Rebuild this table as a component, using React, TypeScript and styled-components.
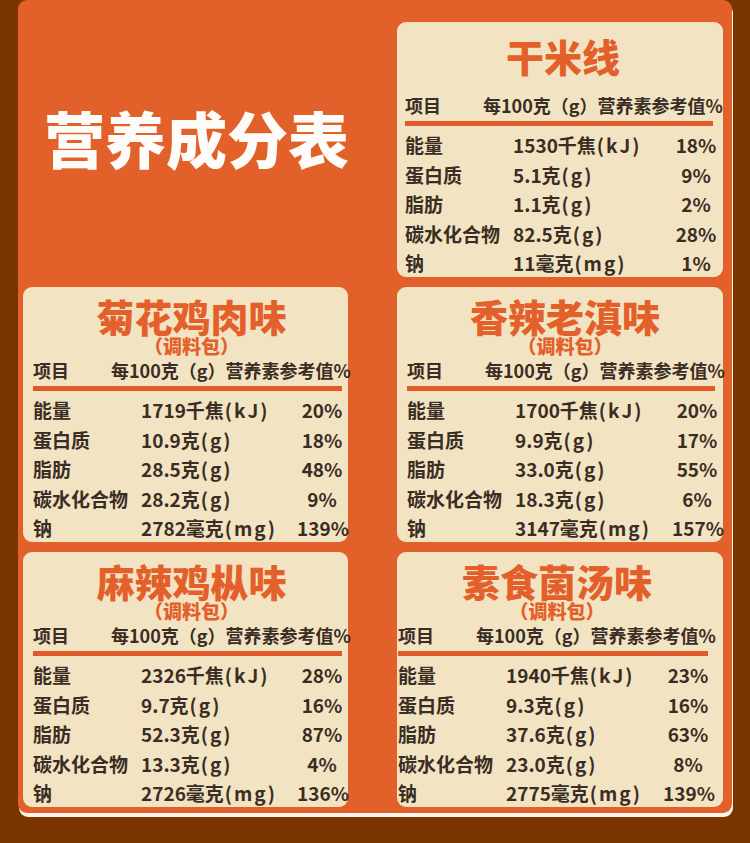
import React from "react";
import styled, { createGlobalStyle } from "styled-components";

const Global = createGlobalStyle`
  html, body { margin: 0; padding: 0; background: #7a3400; }
  body { font-family: "Noto Sans CJK SC", "Noto Sans", sans-serif; }
`;

const Page = styled.div`
  width: 750px;
  height: 843px;
  background: #7a3400;
  padding: 0 18px 0 18px;
  box-sizing: border-box;
  overflow: hidden;
`;

const Panel = styled.div`
  width: 714px;
  height: 813px;
  box-sizing: border-box;
  background: #e2612a;
  border-radius: 9px;
  box-shadow: 1px 4px 0 #fbf5ee;
  padding: 22px 8px 6px 5px;
  display: grid;
  grid-template-columns: 325px 326px;
  grid-template-rows: repeat(3, 255px);
  column-gap: 49px;
  row-gap: 10px;
`;

const Heading = styled.div`
  padding: 78px 0 0 21px;
  color: #fefcf8;
  font-size: 61px;
  font-weight: 900;
  line-height: 76px;
  white-space: nowrap;
`;

const Card = styled.div<{ $padL: number }>`
  background: #f2e4c3;
  border-radius: 9px;
  padding: 8px 0 0 ${(p) => p.$padL}px;
  box-sizing: border-box;
  display: flex;
  flex-direction: column;
  color: #3a2d24;
  & > * {
    flex: none;
  }
`;

const TitleArea = styled.div<{ $single: boolean; $right: number }>`
  height: 60px;
  box-sizing: border-box;
  display: flex;
  flex-direction: column;
  align-items: center;
  padding: ${(p) => (p.$single ? "6px" : "1px")} ${(p) => p.$right}px 0 8px;
`;

const Title = styled.div`
  color: #e4602a;
  font-size: 38px;
  font-weight: 900;
  line-height: 40px;
  white-space: nowrap;
`;

const Sub = styled.div`
  color: #e4602a;
  font-size: 19px;
  font-weight: 900;
  line-height: 19px;
  white-space: nowrap;
`;

const HeaderRow = styled.div`
  height: 30px;
  display: flex;
  align-items: center;
  font-size: 18px;
  font-weight: 700;
  white-space: nowrap;
`;

const HeaderLabel = styled.span`
  width: 78px;
  flex: none;
`;

const Rule = styled.div<{ $right: number }>`
  height: 5px;
  margin: 1px ${(p) => p.$right}px 0 0;
  background: #e2592a;
`;

const Rows = styled.div<{ $right: number }>`
  margin: 4px ${(p) => p.$right}px 0 0;
  display: flex;
  flex-direction: column;
`;

const Row = styled.div`
  height: 29.5px;
  display: grid;
  grid-template-columns: 108px 1fr 50px;
  align-items: center;
  font-size: 19px;
  font-weight: 700;
  white-space: nowrap;
`;

const Unit = styled.span`
  letter-spacing: 2px;
  margin-left: 1px;
`;

const Pct = styled.span`
  text-align: center;
`;

type Data = {
  title: string;
  sub?: string;
  padL: number;
  rowsRight: number;
  lineRight: number;
  rows: [string, string, string, string][];
};

const cards: Data[] = [
  {
    title: "干米线",
    padL: 8,
    rowsRight: 2,
    lineRight: 10,
    rows: [
      ["能量", "1530千焦", "(kJ)", "18%"],
      ["蛋白质", "5.1克", "(g)", "9%"],
      ["脂肪", "1.1克", "(g)", "2%"],
      ["碳水化合物", "82.5克", "(g)", "28%"],
      ["钠", "11毫克", "(mg)", "1%"],
    ],
  },
  {
    title: "菊花鸡肉味",
    sub: "（调料包）",
    padL: 10,
    rowsRight: 1,
    lineRight: 6,
    rows: [
      ["能量", "1719千焦", "(kJ)", "20%"],
      ["蛋白质", "10.9克", "(g)", "18%"],
      ["脂肪", "28.5克", "(g)", "48%"],
      ["碳水化合物", "28.2克", "(g)", "9%"],
      ["钠", "2782毫克", "(mg)", "139%"],
    ],
  },
  {
    title: "香辣老滇味",
    sub: "（调料包）",
    padL: 10,
    rowsRight: 1,
    lineRight: 8,
    rows: [
      ["能量", "1700千焦", "(kJ)", "20%"],
      ["蛋白质", "9.9克", "(g)", "17%"],
      ["脂肪", "33.0克", "(g)", "55%"],
      ["碳水化合物", "18.3克", "(g)", "6%"],
      ["钠", "3147毫克", "(mg)", "157%"],
    ],
  },
  {
    title: "麻辣鸡枞味",
    sub: "（调料包）",
    padL: 10,
    rowsRight: 1,
    lineRight: 6,
    rows: [
      ["能量", "2326千焦", "(kJ)", "28%"],
      ["蛋白质", "9.7克", "(g)", "16%"],
      ["脂肪", "52.3克", "(g)", "87%"],
      ["碳水化合物", "13.3克", "(g)", "4%"],
      ["钠", "2726毫克", "(mg)", "136%"],
    ],
  },
  {
    title: "素食菌汤味",
    sub: "（调料包）",
    padL: 1,
    rowsRight: 10,
    lineRight: 15,
    rows: [
      ["能量", "1940千焦", "(kJ)", "23%"],
      ["蛋白质", "9.3克", "(g)", "16%"],
      ["脂肪", "37.6克", "(g)", "63%"],
      ["碳水化合物", "23.0克", "(g)", "8%"],
      ["钠", "2775毫克", "(mg)", "139%"],
    ],
  },
];

function NutritionCard({ d }: { d: Data }) {
  return (
    <Card $padL={d.padL}>
      <TitleArea $single={!d.sub} $right={d.lineRight}>
        <Title>{d.title}</Title>
        {d.sub && <Sub>{d.sub}</Sub>}
      </TitleArea>
      <HeaderRow>
        <HeaderLabel>项目</HeaderLabel>
        <span>每100克（g）营养素参考值%</span>
      </HeaderRow>
      <Rule $right={d.lineRight} />
      <Rows $right={d.rowsRight}>
        {d.rows.map((r) => (
          <Row key={r[0]}>
            <span>{r[0]}</span>
            <span>
              {r[1]}
              <Unit>{r[2]}</Unit>
            </span>
            <Pct>{r[3]}</Pct>
          </Row>
        ))}
      </Rows>
    </Card>
  );
}

export default function App() {
  return (
    <>
      <Global />
      <Page>
        <Panel>
          <Heading>营养成分表</Heading>
          {cards.map((c) => (
            <NutritionCard key={c.title} d={c} />
          ))}
        </Panel>
      </Page>
    </>
  );
}
